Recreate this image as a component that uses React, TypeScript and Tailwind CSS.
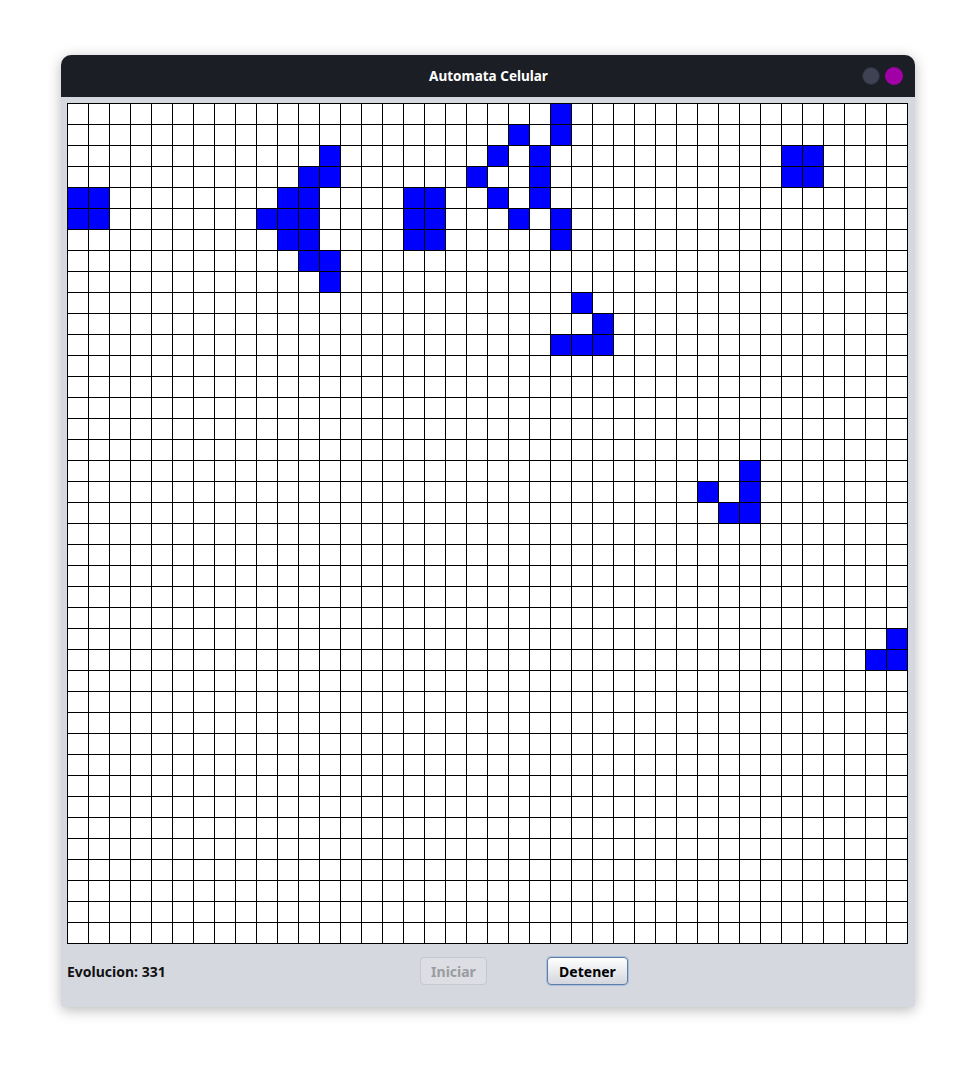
import React from "react";

const N = 40;
const alive: [number, number][] = [
  [4, 0], [4, 1], [5, 0], [5, 1],
  [2, 12], [3, 11], [3, 12], [4, 10], [4, 11], [5, 9], [5, 10], [5, 11], [6, 10], [6, 11], [7, 11], [7, 12], [8, 12],
  [4, 16], [4, 17], [5, 16], [5, 17], [6, 16], [6, 17],
  [0, 23], [1, 21], [1, 23], [2, 20], [2, 22], [3, 19], [3, 22], [4, 20], [4, 22], [5, 21], [5, 23], [6, 23],
  [2, 34], [2, 35], [3, 34], [3, 35],
  [9, 24], [10, 25], [11, 23], [11, 24], [11, 25],
  [17, 32], [18, 30], [18, 32], [19, 31], [19, 32],
  [25, 39], [26, 38], [26, 39],
];
const set = new Set(alive.map(([r, c]) => r * N + c));

export default function App() {
  const cells = [];
  for (let i = 0; i < N * N; i++) {
    cells.push(
      <div key={i} className={set.has(i) ? "bg-[#0000ff]" : "bg-white"} />
    );
  }
  return (
    <div
      className="min-h-[1075px] w-[976px] bg-white pt-[55px] pl-[61px]"
      style={{ fontFamily: '"Noto Sans", "Open Sans", sans-serif' }}
    >
      <div className="w-[854px] h-[952px] rounded-t-[10px] rounded-b-[4px] bg-[#d6d8df] shadow-[0_3px_14px_rgba(0,0,0,0.28)] flex flex-col overflow-hidden">
        <div className="h-[42px] bg-[#1b1e25] flex items-center relative shrink-0">
          <div className="flex-1 text-center text-white font-bold text-[13.5px] pl-[1px]">
            Automata Celular
          </div>
          <div className="absolute right-[12px] top-[12px] flex gap-[5px]">
            <div className="w-[18px] h-[18px] rounded-full bg-[#3e4252] border border-[#2a2d38]" />
            <div className="w-[18px] h-[18px] rounded-full bg-[#a100a6]" />
          </div>
        </div>
        <div className="pl-[6px] pt-[6px]">
          <div className="grid grid-cols-[repeat(40,20px)] grid-rows-[repeat(40,20px)] gap-px p-px bg-black w-[841px]">
            {cells}
          </div>
          <div className="flex items-center mt-[13px]">
            <div className="w-[353px] text-[14px] font-bold text-[#111]">Evolucion: 331</div>
            <button
              disabled
              className="w-[67px] h-[28px] rounded-[4px] border border-[#c6c8ce] bg-[#dcdee3] text-[14px] font-bold text-[#9a9ca1]"
            >
              Iniciar
            </button>
            <button className="ml-[60px] w-[81px] h-[28px] rounded-[4px] border border-[#5f7fa8] bg-gradient-to-b from-white to-[#d3d6dd] text-[14px] font-bold text-black shadow-[0_0_0_1px_rgba(140,175,215,0.6)]">
              Detener
            </button>
          </div>
        </div>
      </div>
    </div>
  );
}
